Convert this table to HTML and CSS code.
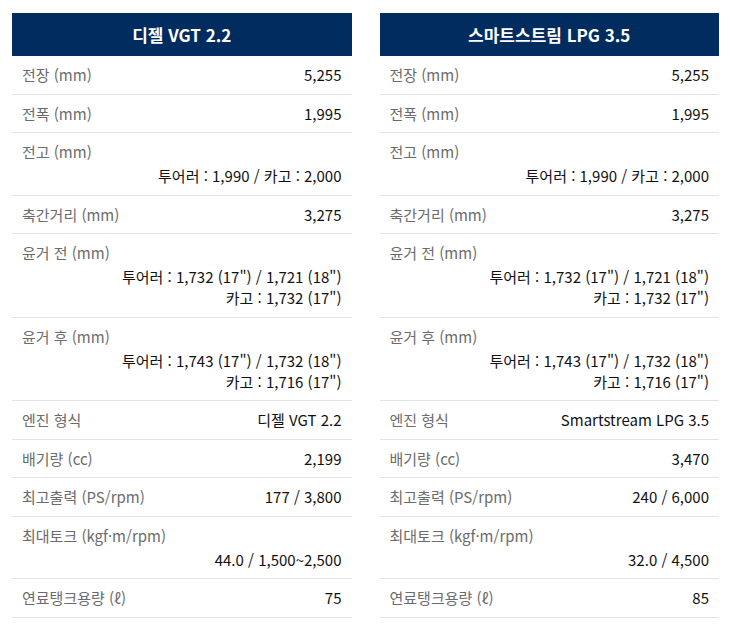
FILE: index.html
```html
<!DOCTYPE html>
<html lang="ko">
<head>
<meta charset="utf-8">
<title>제원</title>
<link rel="stylesheet" href="styles.css">
</head>
<body>
<div class="page">
  <section class="spec">
    <h2 class="spec-title">디젤 VGT 2.2</h2>
    <div class="row"><span class="label">전장 (mm)</span><span class="value">5,255</span></div>
    <div class="row"><span class="label">전폭 (mm)</span><span class="value">1,995</span></div>
    <div class="row stack"><span class="label">전고 (mm)</span><span class="value">투어러 : 1,990 / 카고 : 2,000</span></div>
    <div class="row"><span class="label">축간거리 (mm)</span><span class="value">3,275</span></div>
    <div class="row stack"><span class="label">윤거 전 (mm)</span><span class="value">투어러 : 1,732 (17") / 1,721 (18")<br>카고 : 1,732 (17")</span></div>
    <div class="row stack"><span class="label">윤거 후 (mm)</span><span class="value">투어러 : 1,743 (17") / 1,732 (18")<br>카고 : 1,716 (17")</span></div>
    <div class="row"><span class="label">엔진 형식</span><span class="value">디젤 VGT 2.2</span></div>
    <div class="row"><span class="label">배기량 (cc)</span><span class="value">2,199</span></div>
    <div class="row"><span class="label">최고출력 (PS/rpm)</span><span class="value">177 / 3,800</span></div>
    <div class="row stack"><span class="label">최대토크 (kgf·m/rpm)</span><span class="value">44.0 / 1,500~2,500</span></div>
    <div class="row"><span class="label">연료탱크용량 (ℓ)</span><span class="value">75</span></div>
  </section>
  <section class="spec">
    <h2 class="spec-title">스마트스트림 LPG 3.5</h2>
    <div class="row"><span class="label">전장 (mm)</span><span class="value">5,255</span></div>
    <div class="row"><span class="label">전폭 (mm)</span><span class="value">1,995</span></div>
    <div class="row stack"><span class="label">전고 (mm)</span><span class="value">투어러 : 1,990 / 카고 : 2,000</span></div>
    <div class="row"><span class="label">축간거리 (mm)</span><span class="value">3,275</span></div>
    <div class="row stack"><span class="label">윤거 전 (mm)</span><span class="value">투어러 : 1,732 (17") / 1,721 (18")<br>카고 : 1,732 (17")</span></div>
    <div class="row stack"><span class="label">윤거 후 (mm)</span><span class="value">투어러 : 1,743 (17") / 1,732 (18")<br>카고 : 1,716 (17")</span></div>
    <div class="row"><span class="label">엔진 형식</span><span class="value">Smartstream LPG 3.5</span></div>
    <div class="row"><span class="label">배기량 (cc)</span><span class="value">3,470</span></div>
    <div class="row"><span class="label">최고출력 (PS/rpm)</span><span class="value">240 / 6,000</span></div>
    <div class="row stack"><span class="label">최대토크 (kgf·m/rpm)</span><span class="value">32.0 / 4,500</span></div>
    <div class="row"><span class="label">연료탱크용량 (ℓ)</span><span class="value">85</span></div>
  </section>
</div>
</body>
</html>
```
FILE: styles.css
```css
html, body {
  margin: 0;
  padding: 0;
  background: #ffffff;
}

body {
  font-family: "Noto Sans CJK KR", "Noto Sans", sans-serif;
  font-size: 15px;
  color: #111111;
}

.page {
  display: grid;
  grid-template-columns: 1fr 1fr;
  column-gap: 28px;
  padding: 13px 12px;
}

.spec-title {
  margin: 0;
  height: 43px;
  line-height: 43px;
  background: #002c5f;
  color: #ffffff;
  text-align: center;
  font-size: 17px;
  font-weight: 700;
}

.row {
  display: flex;
  justify-content: space-between;
  align-items: flex-start;
  padding: 8.25px 10px;
  border-bottom: 1px solid #e4e4e4;
  line-height: 21px;
}

.row.stack {
  flex-direction: column;
  align-items: stretch;
}

.row.stack .value {
  margin-top: 3px;
  text-align: right;
}

.label {
  color: #6b6b6b;
}

.value {
  color: #111111;
}
```
